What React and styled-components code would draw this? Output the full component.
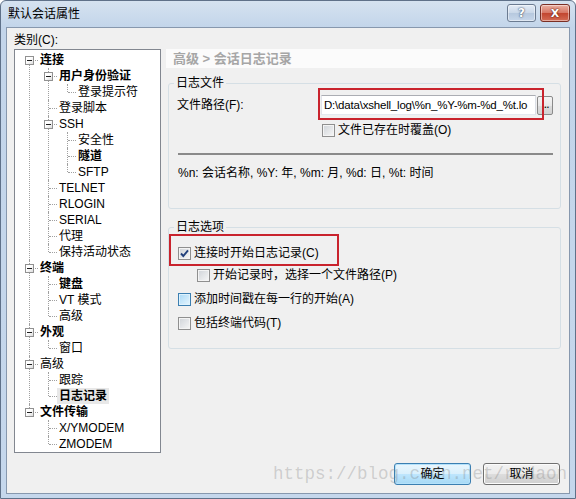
import React from "react";
import styled, { createGlobalStyle } from "styled-components";

const GlobalStyle = createGlobalStyle`
  html, body { margin: 0; padding: 0; background: #fff; }
  body {
    font-family: "Liberation Sans", "Noto Sans CJK SC", sans-serif;
    font-size: 12px;
    color: #000;
  }
`;

const tree = [
  {
    label: "连接",
    bold: true,
    children: [
      { label: "用户身份验证", bold: true, children: [{ label: "登录提示符" }] },
      { label: "登录脚本" },
      {
        label: "SSH",
        children: [{ label: "安全性" }, { label: "隧道", bold: true }, { label: "SFTP" }],
      },
      { label: "TELNET" },
      { label: "RLOGIN" },
      { label: "SERIAL" },
      { label: "代理" },
      { label: "保持活动状态" },
    ],
  },
  {
    label: "终端",
    bold: true,
    children: [{ label: "键盘", bold: true }, { label: "VT 模式" }, { label: "高级" }],
  },
  { label: "外观", bold: true, children: [{ label: "窗口" }] },
  {
    label: "高级",
    children: [{ label: "跟踪" }, { label: "日志记录", bold: true, selected: true }],
  },
  {
    label: "文件传输",
    bold: true,
    children: [{ label: "X/YMODEM" }, { label: "ZMODEM" }],
  },
];

const TreeNode = ({ node, first, last, root }) => (
  <TreeItem $first={root && first} $last={last}>
    <TreeRow>
      {node.children && <Expander />}
      <TreeLabel $bold={node.bold} $selected={node.selected}>
        {node.label}
      </TreeLabel>
    </TreeRow>
    {node.children && (
      <TreeList>
        {node.children.map((c, i) => (
          <TreeNode
            key={c.label + i}
            node={c}
            first={i === 0}
            last={i === node.children.length - 1}
          />
        ))}
      </TreeList>
    )}
  </TreeItem>
);

const Checkbox = ({ checked, hot }) => (
  <CheckBoxBox $hot={hot}>
    {checked && (
      <svg width="11" height="11" viewBox="0 0 11 11">
        <path d="M2 5.5 L4.3 8 L9 2.3" fill="none" stroke="#22407c" strokeWidth="1.9" />
      </svg>
    )}
  </CheckBoxBox>
);

export default function App() {
  return (
    <>
      <GlobalStyle />
      <Window>
        <TitleBar>
          <TitleText>默认会话属性</TitleText>
          <CaptionButtons>
            <HelpButton>?</HelpButton>
            <CloseButton>X</CloseButton>
          </CaptionButtons>
        </TitleBar>
        <Client>
          <CategoryLabel>类别(C):</CategoryLabel>
          <TreeBox>
            <TreeList $root>
              {tree.map((n, i) => (
                <TreeNode
                  key={n.label + i}
                  node={n}
                  root
                  first={i === 0}
                  last={i === tree.length - 1}
                />
              ))}
            </TreeList>
          </TreeBox>
          <RightPanel>
            <PageHeader>高级 &gt; 会话日志记录</PageHeader>
            <Group $top={7} $bottom={27}>
              <GroupLegend>日志文件</GroupLegend>
              <PathRow>
                <PathLabel>文件路径(F):</PathLabel>
                <PathInput>D:\data\xshell_log\%n_%Y-%m-%d_%t.lo</PathInput>
                <BrowseButton>...</BrowseButton>
                <RedMark $left={141} $top={-7} $width={226} />
              </PathRow>
              <CheckRow $top={7} $indent={145}>
                <Checkbox />
                文件已存在时覆盖(O)
              </CheckRow>
              <Separator />
              <HintText>%n: 会话名称, %Y: 年, %m: 月, %d: 日, %t: 时间</HintText>
            </Group>
            <Group $top={10} $bottom={17}>
              <GroupLegend>日志选项</GroupLegend>
              <CheckRow $top={10} $indent={1}>
                <Checkbox checked />
                连接时开始日志记录(C)
                <RedMark $left={-9} $top={-11} $width={170} />
              </CheckRow>
              <CheckRow $top={6} $indent={20}>
                <Checkbox />
                开始记录时，选择一个文件路径(P)
              </CheckRow>
              <CheckRow $top={8} $indent={1}>
                <Checkbox hot />
                添加时间戳在每一行的开始(A)
              </CheckRow>
              <CheckRow $top={8} $indent={1}>
                <Checkbox />
                包括终端代码(T)
              </CheckRow>
            </Group>
          </RightPanel>
          <Footer>
            <Watermark>https://blog.csdn.net/rcdaon</Watermark>
            <DialogButton $default>确定</DialogButton>
            <DialogButton>取消</DialogButton>
          </Footer>
        </Client>
      </Window>
    </>
  );
}

const Window = styled.div`
  width: 576px;
  height: 499px;
  box-sizing: border-box;
  display: flex;
  flex-direction: column;
  border: 1px solid #5f7189;
  border-radius: 6px 6px 0 0;
  background: linear-gradient(#d5e2f0, #c3d5ea 26px, #c5d7ec);
`;

const TitleBar = styled.div`
  height: 26px;
  flex: none;
  display: flex;
  justify-content: space-between;
  align-items: flex-start;
  padding: 0 5px 0 7px;
`;

const TitleText = styled.div`
  margin-top: 5px;
  line-height: 16px;
  font-size: 12px;
`;

const CaptionButtons = styled.div`
  display: flex;
  gap: 4px;
  margin-top: 3px;
`;

const CaptionButton = styled.div`
  height: 18px;
  box-sizing: border-box;
  border: 1px solid #6b7b91;
  border-radius: 3px;
  display: flex;
  align-items: center;
  justify-content: center;
  font-family: "DejaVu Sans", sans-serif;
  font-weight: bold;
  color: #fff;
  box-shadow: inset 0 0 0 1px rgba(255, 255, 255, 0.45);
`;

const HelpButton = styled(CaptionButton)`
  width: 29px;
  font-size: 12px;
  background: linear-gradient(#e4ecf6, #c9d7e8 50%, #b6c8de 51%, #c7d7ea);
  text-shadow: 0 0 2px #3d4f68, 0 0 1px #3d4f68;
`;

const CloseButton = styled(CaptionButton)`
  width: 30px;
  font-size: 11px;
  border-color: #7a2f25;
  background: linear-gradient(#eab0a2, #d77563 50%, #c2452f 51%, #d46c55);
  text-shadow: 0 0 2px #5e1b12, 0 0 1px #5e1b12;
`;

const Client = styled.div`
  flex: 1;
  margin: 0 5px 4px 5px;
  border: 1px solid #8798ae;
  background: #f0f0f0;
  display: grid;
  grid-template-columns: 147px 396px;
  grid-template-rows: 21px 404px auto;
  column-gap: 5px;
  padding-left: 7px;
`;

const CategoryLabel = styled.div`
  grid-column: 1 / -1;
  padding-top: 4px;
  line-height: 16px;
`;

const TreeBox = styled.div`
  border: 1px solid #828790;
  background: #fff;
  padding-top: 2px;
  overflow: hidden;
`;

const TreeList = styled.ul`
  list-style: none;
  margin: 0 0 0 ${(p) => (p.$root ? 0 : 19)}px;
  padding: 0;
`;

const TreeItem = styled.li`
  position: relative;
  &::before {
    content: "";
    position: absolute;
    left: 14px;
    top: ${(p) => (p.$first ? "8px" : "0")};
    ${(p) => (p.$last ? "height: 8px;" : "bottom: 0;")}
    border-left: 1px dotted #a0a0a0;
  }
`;

const TreeRow = styled.div`
  position: relative;
  height: 16px;
  display: flex;
  align-items: center;
  padding-left: 25px;
  &::before {
    content: "";
    position: absolute;
    left: 15px;
    top: 8px;
    width: 8px;
    border-top: 1px dotted #a0a0a0;
  }
`;

const Expander = styled.span`
  position: absolute;
  z-index: 1;
  left: 10px;
  top: 4px;
  width: 9px;
  height: 9px;
  box-sizing: border-box;
  border: 1px solid #919191;
  background: linear-gradient(135deg, #fff 40%, #dcdcdc);
  &::after {
    content: "";
    position: absolute;
    left: 1px;
    top: 3px;
    width: 5px;
    height: 1px;
    background: #1e1e1e;
  }
`;

const TreeLabel = styled.span`
  line-height: 16px;
  white-space: nowrap;
  padding: 0 2px;
  margin-left: -2px;
  font-weight: ${(p) => (p.$bold ? "bold" : "normal")};
  background: ${(p) => (p.$selected ? "#e8e8e8" : "transparent")};
`;

const RightPanel = styled.div`
  display: flex;
  flex-direction: column;
`;

const PageHeader = styled.div`
  height: 19px;
  line-height: 19px;
  background: #fbfbfb;
  padding-left: 7px;
  font-size: 13px;
  font-weight: bold;
  color: #a6a6a6;
`;

const Group = styled.fieldset`
  margin: ${(p) => p.$top}px 1px 0 2px;
  padding: 0 7px ${(p) => p.$bottom}px 8px;
  border: 1px solid #d5dfe5;
  border-radius: 3px;
  min-width: 0;
`;

const GroupLegend = styled.legend`
  padding: 0 2px;
  margin-left: -3px;
  line-height: 16px;
`;

const PathRow = styled.div`
  position: relative;
  display: flex;
  align-items: center;
  height: 20px;
  margin-top: 4px;
`;

const PathLabel = styled.div`
  flex: 0 0 144px;
  line-height: 16px;
`;

const PathInput = styled.div`
  flex: 1;
  min-width: 0;
  height: 20px;
  box-sizing: border-box;
  border: 1px solid #abadb3;
  border-color: #abadb3 #dbdfe6 #e3e9ef #e2e3ea;
  background: #fff;
  padding: 0 2px;
  font-size: 11.5px;
  letter-spacing: -0.2px;
  line-height: 18px;
  white-space: nowrap;
`;

const BrowseButton = styled.div`
  flex: none;
  width: 16px;
  height: 19px;
  margin-left: 1px;
  box-sizing: border-box;
  border: 1px solid #8a8a8a;
  border-radius: 2px;
  background: linear-gradient(#f4f4f4, #e8e8e8 50%, #dcdcdc 51%, #d2d2d2);
  line-height: 15px;
  text-align: center;
  letter-spacing: -1px;
`;

const RedMark = styled.div`
  position: absolute;
  left: ${(p) => p.$left}px;
  top: ${(p) => p.$top}px;
  width: ${(p) => p.$width}px;
  height: 32px;
  box-sizing: border-box;
  border: 2px solid #c9232d;
  pointer-events: none;
`;

const CheckRow = styled.div`
  position: relative;
  display: flex;
  align-items: center;
  gap: 3px;
  height: 16px;
  line-height: 16px;
  margin-top: ${(p) => p.$top}px;
  margin-left: ${(p) => p.$indent}px;
  white-space: nowrap;
`;

const CheckBoxBox = styled.span`
  flex: none;
  width: 13px;
  height: 13px;
  box-sizing: border-box;
  border: 1px solid ${(p) => (p.$hot ? "#3c7fb1" : "#8f8f8f")};
  box-shadow: inset 0 0 0 1px ${(p) => (p.$hot ? "#def2fd" : "#f4f4f4")};
  background: ${(p) =>
    p.$hot
      ? "linear-gradient(135deg, #a9d9f7, #e6f5fd)"
      : "linear-gradient(135deg, #cfd3d8, #f7f7f7)"};
  display: flex;
  align-items: center;
  justify-content: center;
`;

const Separator = styled.div`
  margin: 15px 0 0 1px;
  height: 2px;
  background: #8a8a8a;
`;

const HintText = styled.div`
  margin-top: 10px;
  padding-left: 1px;
  line-height: 16px;
`;

const Footer = styled.div`
  grid-column: 1 / -1;
  position: relative;
  margin-top: 10px;
  display: flex;
  justify-content: flex-end;
  gap: 12px;
  padding-right: 2px;
`;

const DialogButton = styled.div`
  width: 77px;
  height: 22px;
  box-sizing: border-box;
  border: 1px solid ${(p) => (p.$default ? "#3c7fb1" : "#707070")};
  border-radius: 3px;
  box-shadow: inset 0 0 0 1px ${(p) => (p.$default ? "#b5e2fb" : "#fcfcfc")};
  background: ${(p) =>
    p.$default
      ? "linear-gradient(#eaf6fd, #d9f0fc 50%, #bee6fd 51%, #a7d9f5)"
      : "linear-gradient(#f2f2f2, #ebebeb 50%, #dddddd 51%, #cfcfcf)"};
  line-height: 20px;
  text-align: center;
`;

const Watermark = styled.div`
  position: absolute;
  left: 259px;
  top: 0;
  line-height: 22px;
  font-family: "Liberation Mono", monospace;
  font-size: 17.5px;
  color: rgba(120, 120, 120, 0.3);
  white-space: nowrap;
  pointer-events: none;
  z-index: 2;
`;
